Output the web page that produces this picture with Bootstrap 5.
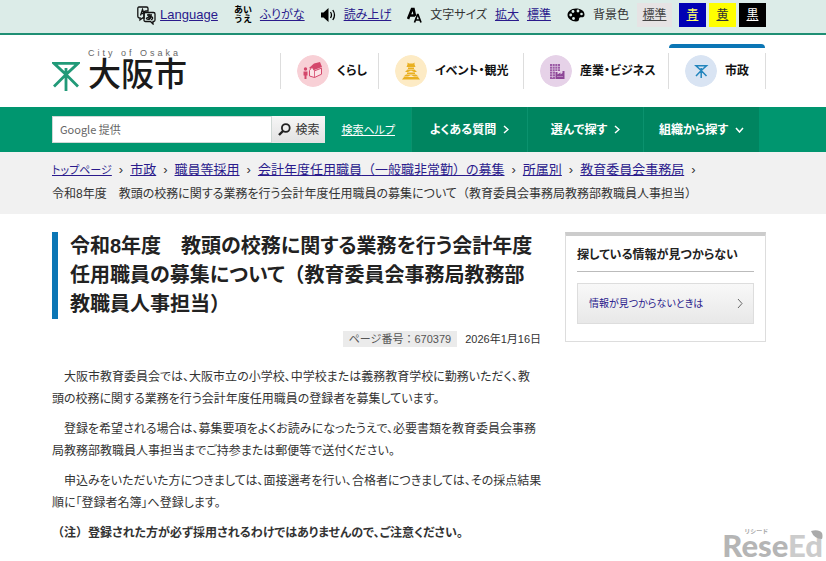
<!DOCTYPE html>
<html lang="ja">
<head>
<meta charset="utf-8">
<meta name="viewport" content="width=device-width, initial-scale=1">
<title>大阪市</title>
<link href="https://cdn.jsdelivr.net/npm/bootstrap@5.3.0/dist/css/bootstrap.min.css" rel="stylesheet">
<style>
body{font-family:"Liberation Sans","Noto Sans CJK JP",sans-serif;font-size:12px;line-height:22px;color:#333;background:#fff;font-feature-settings:"palt";min-height:100vh}
a{color:#2a1a8c}
svg{display:block;flex:none}
.full{font-feature-settings:normal}
.wrap{padding-left:52px;padding-right:60px}
.tools{background:#dcece8;border-bottom:2px solid #1f8f74;height:35px;padding-top:3px;padding-bottom:6px;line-height:24px;white-space:nowrap;font-size:12px}
.tools .lang{font-size:13px}
.kana{font-size:9px;line-height:9px;font-weight:700;color:#000;font-feature-settings:normal}
.swatches{gap:3px}
.swatch{border:0;padding:0;width:27px;height:24px;text-decoration:underline;line-height:24px}
.sw-std{background:#e6e3e4;width:35px;color:#444}
.sw-blue{background:#0000b4;color:#ff6}
.sw-yel{background:#ff0;color:#333}
.sw-blk{background:#000;color:#fff}
.brand{color:#1a1a1a;padding-top:13px}
.brand small{font-size:9px;line-height:10px;letter-spacing:3px;color:#666}
.brand strong{font-size:33px;line-height:34px;font-weight:500;font-feature-settings:normal}
.masthead{height:72px}
.cat{height:36px;margin-top:18px;border-left:1px solid #ddd;padding-left:16px;color:#111;font-weight:700;font-size:12px;gap:8px;white-space:nowrap}
.cat-s{width:98px}.cat-l{width:145px}
.cat-on{border-right:1px solid #ddd;position:relative}
.cat-on::before{content:"";position:absolute;left:0;right:0;top:-9px;height:4px;background:#0b76b5;border-radius:4px 4px 0 0}
.disc{width:32px;height:32px;border-radius:50%}
.greenbar{background:#00966f;height:45px;padding-left:52px;padding-right:67px}
.query{height:27px;border:1px solid #cfd8d5;border-radius:0;padding:0 7px;font-size:12px;color:#444}
.query::placeholder{font-size:11px;color:#666;opacity:1;font-family:"Noto Sans CJK JP",sans-serif}
.go{height:27px;width:53px;border:0;background:linear-gradient(#f6f6f6,#e2e2e2);color:#333;font-size:12px;padding:0}
.help{font-size:11px}
.gnav a{width:116px;background:#008560;border-left:1px solid #0b926e;color:#fff;font-weight:700;font-size:12px;gap:7px;white-space:nowrap}
.crumbs{background:#f1f1f1;min-height:62px;padding-top:6px;padding-bottom:8px;font-size:13px;line-height:24px}
.trail{column-gap:7px;white-space:nowrap}
.trail .top{font-size:11px}
.here{font-size:12px}
.columns{padding-top:18px}
.headline{border-left:6px solid #0b76b5;padding-left:12px;font-size:20px;line-height:29px;font-weight:700;color:#222;white-space:nowrap}
.main-col{width:489px;max-width:100%}
.meta{font-size:11px;line-height:16px}
.pid{background:#ebebeb;padding:0 6px;color:#555}
.prose{padding-top:3px;white-space:nowrap}
.prose p{margin-bottom:8px}
.aside{border:1px solid #ddd;border-top:4px solid #ccc;padding:8px 11px 17px}
.aside h2{font-size:12px;line-height:22px;padding-bottom:5px;font-weight:700;color:#222;border-bottom:1px solid #bbb;margin-bottom:11px}
.find{border:1px solid #ddd;background:linear-gradient(#f8f8f8,#e8e8e8);height:41px;padding:0 10px 0 11px;font-size:10px}
.watermark{position:absolute;right:3px;bottom:1px;font-family:Lato,sans-serif;font-weight:900;font-size:31px;line-height:30px;color:#b5b5b5}
.watermark i{font-style:normal;color:#ccc}
.ruby-mini{position:absolute;left:22px;top:-3px;font:700 6px/8px "Noto Sans CJK JP",sans-serif;color:#aaa}
.watermark svg{position:absolute;right:0;top:0}
</style>
</head>
<body class="position-relative overflow-x-hidden">
<div class="tools wrap d-flex justify-content-end">
 <div class="d-flex align-items-center gap-1 me-3">
  <svg width="19" height="19" viewBox="0 0 19 19" fill="none" stroke="#111" stroke-width="1.3"><path d="M2 1h7.500q1.500 0 1.500 1.500V5H9q-2 0-2 2v5H5.500L3 14v-2.200Q.8 12 .8 10V2.500Q.8 1 2 1z"/><path d="M8.500 6.500h8q1.500 0 1.500 1.500v6q0 1.500-1.500 1.500H16V18l-2.500-2.500h-5Q7 15.500 7 14V8q0-1.500 1.500-1.500z"/><path d="M3.500 9.500l2-6 1.500 4M4.200 7.500h2M10 9h5M12 7.800v5.700M14.500 10.200q-1.500 4-4 3t1-2.200 4 .5-1.500 2.300"/></svg>
  <a class="lang" href="#">Language</a>
 </div>
 <div class="d-flex align-items-center gap-2 me-3"><span class="kana" aria-hidden="true">あい<br>うえ</span><a href="#">ふりがな</a></div>
 <div class="d-flex align-items-center gap-2 me-3">
  <svg width="15" height="14" viewBox="0 0 15 14"><path d="M0 4.500h2.500L7.500 0v14L2.500 9.500H0z" fill="#000"/><path d="M9.500 4q2 3 0 6M11.800 2q3.400 5 0 10" fill="none" stroke="#000" stroke-width="1.300"/></svg>
  <a href="#">読み上げ</a>
 </div>
 <div class="d-flex align-items-center gap-2 me-3">
  <svg width="15" height="16" viewBox="0 0 15 16" fill="none" stroke="#000"><path d="M1 12L5 2h1.500L8 9M3 8.500h5" stroke-width="2.600"/><path d="M7.500 15.500l3-8h.5l3 8M9 13h4" stroke-width="1.700"/></svg>
  <span>文字サイズ</span><a href="#">拡大</a><a href="#">標準</a>
 </div>
 <div class="d-flex align-items-center gap-2 me-2">
  <svg width="18" height="14" viewBox="0 0 18 14"><path d="M9 .5C14 .5 17.500 3 17.500 6.500S15 9 13 9.500s.5 4-4 4-8.500-3-8.500-6.500S4 .5 9 .5z"/><g fill="#dcece8"><circle cx="6" cy="3.500" r="1.400"/><circle cx="11" cy="3" r="1.400"/><circle cx="14.500" cy="6" r="1.300"/><circle cx="3.700" cy="7" r="1.400"/><circle cx="6.500" cy="10.500" r="1.400"/></g></svg>
  <span>背景色</span>
 </div>
 <div class="swatches d-flex">
  <button class="swatch sw-std me-1" type="button">標準</button><button class="swatch sw-blue" type="button">青</button><button class="swatch sw-yel" type="button">黄</button><button class="swatch sw-blk" type="button">黒</button>
 </div>
</div>

<header class="masthead wrap d-flex justify-content-between">
 <a class="brand d-flex text-decoration-none" href="#">
  <svg class="mt-2 pt-1 me-2" width="28" height="36" viewBox="0 0 28 32" fill="none" stroke="#219a78" stroke-width="2.800"><path d="M2 3.400h24L14 14.500zM14 8v23M2 26.500L14 14.500l12 12"/></svg>
  <span class="d-flex flex-column"><small>City of Osaka</small><strong>大阪市</strong></span>
 </a>
 <nav class="d-flex">
  <a href="#" class="cat cat-s d-flex align-items-center text-decoration-none"><svg class="disc" viewBox="0 0 32 32"><circle cx="16" cy="16" r="16" fill="#f8d0d6"/><g fill="#d4476b"><path d="M12 13l5-4.500 6-1.500 2 5-8 3z"/><circle cx="8.500" cy="14" r="1.700"/><path d="M6.500 16.500h4v4h-1V24H7.500v-3.500h-1z"/></g><path d="M12.500 15.500L15 12l2.500 3.800 7-2.600v6l-7 3.300-5-1.500z" fill="#fbe4e7" stroke="#d4476b"/><path d="M17.500 16v6.500" stroke="#d4476b" fill="none" stroke-width=".8"/></svg>くらし</a>
  <a href="#" class="cat cat-l d-flex align-items-center text-decoration-none"><svg class="disc" viewBox="0 0 32 32"><circle cx="16" cy="16" r="16" fill="#fdebc5"/><g fill="#e9b020"><path d="M12.500 7.500l1.500 1h4l1.500-1v2l1 2.500h-9l1-2.500zM13 12.500h6v1.500h-6zM10 17l2.500-2.500h7L22 17h-3l-3-1.500-3 1.500zM12 17.500h8V19h-8zM8.500 21.500l2.500-2h10l2.500 2H19L16 20l-3 1.500zM9 22h14l2 2.500H7z"/></g></svg>イベント・観光</a>
  <a href="#" class="cat cat-l d-flex align-items-center text-decoration-none"><svg class="disc" viewBox="0 0 32 32"><circle cx="16" cy="16" r="16" fill="#e6d2e8"/><path d="M10 9h10v7h-5v8h-5z" fill="#9c5ba5"/><path d="M12.500 9v14M15 9v7M17.500 9v7M10 11.500h10M10 14h10M10 16.500h5M10 19h5M10 21.500h5" stroke="#d9bedc" stroke-width=".7"/><path d="M15.500 24v-7h2v2.500l3-2v2l2-1.500V16h2v8z" fill="#8d4697"/><path d="M17.500 21.500h6" stroke="#d9bedc" stroke-dasharray="1 1"/></svg>産業・ビジネス</a>
  <a href="#" class="cat cat-s cat-on d-flex align-items-center text-decoration-none"><svg class="disc" viewBox="0 0 32 32"><circle cx="16" cy="16" r="16" fill="#d9e4f3"/><path d="M11 10.800h10.500L16.200 15.500zM16.200 13v10M11 21l5.200-5.500 5.300 5.500" fill="none" stroke="#2385bd" stroke-width="1.500"/></svg>市政</a>
 </nav>
</header>

<div class="greenbar d-flex align-items-center">
 <form class="d-flex flex-grow-1" role="search">
  <input class="query flex-grow-1 w-100" type="text" placeholder="Google 提供" aria-label="サイト内検索">
  <button class="go flex-shrink-0 d-flex align-items-center justify-content-center gap-1" type="button"><svg width="13" height="13" viewBox="0 0 13 13" fill="none" stroke="#222"><circle cx="7.800" cy="5" r="3.900" stroke-width="1.800"/><path d="M5 8l-4 4" stroke-width="2.400"/></svg>検索</button>
 </form>
 <a class="help text-white text-nowrap mx-3" href="#">検索ヘルプ</a>
 <nav class="gnav d-flex align-self-stretch">
  <a href="#" class="d-flex align-items-center justify-content-center text-decoration-none">よくある質問<svg width="6" height="9" viewBox="0 0 6 9" fill="none" stroke="#fff" stroke-width="1.500"><path d="M1 1l4 3.500L1 8"/></svg></a>
  <a href="#" class="d-flex align-items-center justify-content-center text-decoration-none">選んで探す<svg width="6" height="9" viewBox="0 0 6 9" fill="none" stroke="#fff" stroke-width="1.500"><path d="M1 1l4 3.500L1 8"/></svg></a>
  <a href="#" class="d-flex align-items-center justify-content-center text-decoration-none">組織から探す<svg width="9" height="6" viewBox="0 0 9 6" fill="none" stroke="#fff" stroke-width="1.500"><path d="M1 1l3.500 4L8 1"/></svg></a>
 </nav>
</div>

<div class="crumbs wrap">
 <div class="trail d-flex flex-wrap align-items-center">
  <a class="top" href="#">トップページ</a><span>›</span><a href="#">市政</a><span>›</span><a href="#">職員等採用</a><span>›</span><a href="#">会計年度任用職員<span class="full">（</span>一般職非常勤<span class="full">）</span>の募集</a><span>›</span><a href="#">所属別</a><span>›</span><a href="#">教育委員会事務局</a><span>›</span>
 </div>
 <div class="here">令和8年度　教頭の校務に関する業務を行う会計年度任用職員の募集について<span class="full">（</span>教育委員会事務局教務部教職員人事担当<span class="full">）</span></div>
</div>

<div class="columns wrap d-flex align-items-start justify-content-between">
 <main class="main-col flex-shrink-1">
  <h1 class="headline mb-2">令和8年度　教頭の校務に関する業務を行う会計年度<br>任用職員の募集について<span class="full">（</span>教育委員会事務局教務部<br>教職員人事担当<span class="full">）</span></h1>
  <div class="meta d-flex justify-content-end mt-2 pt-1 mb-3"><span class="pid me-2"><span class="full">ページ番号：</span>670379</span><span>2026年1月16日</span></div>
  <div class="prose">
   <p>　大阪市教育委員会では、大阪市立の小学校、中学校または義務教育学校に勤務いただく、教<br>頭の校務に関する業務を行う会計年度任用職員の登録者を募集しています。</p>
   <p>　登録を希望される場合は、募集要項をよくお読みになったうえで、必要書類を教育委員会事務<br>局教務部教職員人事担当までご持参または郵便等で送付ください。</p>
   <p>　申込みをいただいた方につきましては、面接選考を行い、合格者につきましては、その採点結果<br>順に「登録者名簿」へ登録します。</p>
   <p class="fw-bold"><span class="full">（</span>注<span class="full">）</span>登録された方が必ず採用されるわけではありませんので、ご注意ください。</p>
  </div>
 </main>
 <aside class="aside flex-grow-1 ms-4">
  <h2>探している情報が見つからない</h2>
  <a class="find d-flex align-items-center justify-content-between text-decoration-none" href="#">情報が見つからないときは<svg width="6" height="9" viewBox="0 0 6 9" fill="none" stroke="#666"><path d="M1 0l4 4.500L1 9"/></svg></a>
 </aside>
</div>
<div class="watermark">Rese<i>Ed</i><span class="ruby-mini">リシード</span><svg width="12" height="9" viewBox="0 0 12 9"><path d="M0 1q8-2 11 2 1 3 0 6-8 0-11-8z" fill="#aaa"/></svg></div>
<script src="https://cdn.jsdelivr.net/npm/bootstrap@5.3.0/dist/js/bootstrap.bundle.min.js"></script>
</body>
</html>
